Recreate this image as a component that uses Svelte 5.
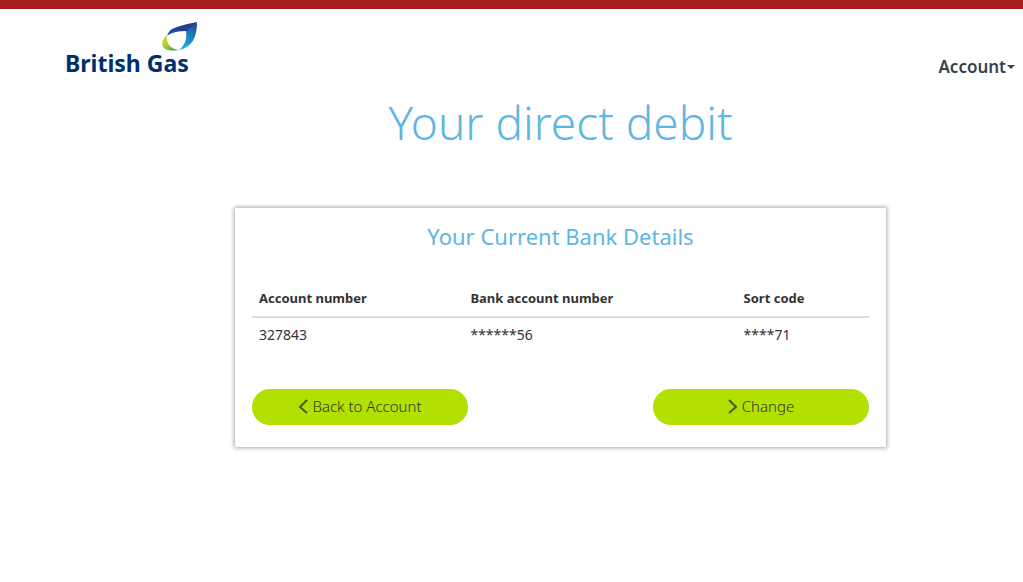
<script lang="ts">
	const accounts = [
		{ number: '327843', bank: '******56', sort: '****71' }
	]
	let open = $state(false)
	const toggle = () => { open = !open }
</script>

<svelte:head>
	<title>Your direct debit</title>
</svelte:head>

<header>
	<a class="logo" href="#home" aria-label="British Gas">
		<svg viewBox="0 0 35 29" aria-hidden="true">
			<defs>
				<linearGradient id="blade" x1="1" y1="0" x2="0.4" y2="1">
					<stop offset="0" stop-color="#2b3a90" />
					<stop offset="0.45" stop-color="#1678bd" />
					<stop offset="1" stop-color="#20b4d8" />
				</linearGradient>
				<linearGradient id="top" x1="0" y1="1" x2="1" y2="0">
					<stop offset="0" stop-color="#1a63b0" />
					<stop offset="0.4" stop-color="#2a3f98" />
					<stop offset="1" stop-color="#2b3488" />
				</linearGradient>
				<linearGradient id="leaf" x1="0" y1="0" x2="0.8" y2="1">
					<stop offset="0" stop-color="#d3dc35" />
					<stop offset="0.55" stop-color="#a5cb38" />
					<stop offset="1" stop-color="#3da447" />
				</linearGradient>
			</defs>
			<path fill="url(#blade)" d="M35 0 C35 12 32 25 17 28 C23 23 25 17 24 9 Z" />
			<path fill="url(#top)" d="M35 0 C25 2 16 4 10 7 C7 9 6 11 5 14 C10 10 17 9 25 9 Z" />
			<path fill="url(#leaf)" d="M4 14 C0 18 -1 23 2 26 C5 29 12 29 17 28 C9 27 4 22 5 14 Z" />
		</svg>
		<span>British Gas</span>
	</a>
	<button class="account" aria-expanded={open} onclick={toggle}>
		Account <i class="caret"></i>
	</button>
</header>

<main>
	<h1>Your direct debit</h1>

	<section class="card">
		<h2>Your Current Bank Details</h2>

		<table>
			<thead>
				<tr>
					<th scope="col" class="number">Account number</th>
					<th scope="col" class="bank">Bank account number</th>
					<th scope="col">Sort code</th>
				</tr>
			</thead>
			<tbody>
				{#each accounts as account}
					<tr>
						<td>{account.number}</td>
						<td>{account.bank}</td>
						<td>{account.sort}</td>
					</tr>
				{/each}
			</tbody>
		</table>

		<div class="actions">
			<button>
				<svg class="chevron" viewBox="0 0 10 16" aria-hidden="true"><path d="M9 2 L2 9 L9 15" /></svg>
				Back to Account
			</button>
			<button>
				<svg class="chevron" viewBox="0 0 10 16" aria-hidden="true"><path d="M1 2 L8 9 L1 15" /></svg>
				Change
			</button>
		</div>
	</section>
</main>

<style>
	:global(body) {
		background: #fff;
		color: #333;
		font-family: "Noto Sans", "Open Sans", sans-serif;
		font-size: 14px;
		line-height: 20px;
	}

	header {
		display: flex;
		justify-content: space-between;
		align-items: flex-end;
		border-top: 9px solid #a61c1f;
		padding: 13px 8px 0 65px;
	}

	.logo {
		display: flex;
		flex-direction: column;
		color: #002f6c;
		font: bold 23px/24px "Noto Sans", sans-serif;
		text-decoration: none;

		& svg {
			width: 35px;
			height: 29px;
			margin: 0 0 0 97px;
		}

		& span {
			white-space: nowrap;
		}
	}

	button {
		border: 0;
		background: none;
		font-family: inherit;
		cursor: pointer;
	}

	.account {
		display: flex;
		align-items: center;
		gap: 1px;
		padding: 0;
		color: #36424a;
		font-size: 17px;
		font-weight: 600;
		line-height: 16px;
	}

	.caret {
		border: 4px solid transparent;
		border-top-color: #36424a;
		border-bottom: 0;
	}

	main {
		padding: 0 137px 40px 235px;
	}

	h1, h2 {
		margin: 0;
		color: #5eb6e4;
		text-align: center;
	}

	h1 {
		padding: 16px 0 54px;
		font-size: 46px;
		font-weight: 300;
		line-height: 63px;
	}

	h2 {
		font-size: 22px;
		font-weight: 400;
		line-height: 28px;
	}

	.card {
		padding: 14px 17px 22px;
		box-shadow: 0 0 4px 1px #aaa;
	}

	table {
		width: 100%;
		margin: 30px 0 36px;
		border-collapse: collapse;
		table-layout: fixed;
	}

	th, td {
		padding: 8px 7px;
		text-align: left;
	}

	td {
		padding-top: 7px;
	}

	th {
		border-bottom: 2px solid #ddd;
		font-size: 13px;
		font-weight: 700;
	}

	.number {
		width: 32%;
	}

	.bank {
		width: 42%;
	}

	.actions {
		display: flex;
		justify-content: space-between;

		& button {
			display: flex;
			justify-content: center;
			align-items: center;
			gap: 4px;
			width: 35%;
			height: 36px;
			padding: 0 0 2px;
			border-radius: 18px;
			background: #b2e000;
			color: #333;
			font-size: 15px;
			font-weight: 300;
		}
	}

	.chevron {
		width: 10px;
		height: 16px;
		fill: none;
		stroke: #4b5a20;
		stroke-width: 2;
	}
</style>
